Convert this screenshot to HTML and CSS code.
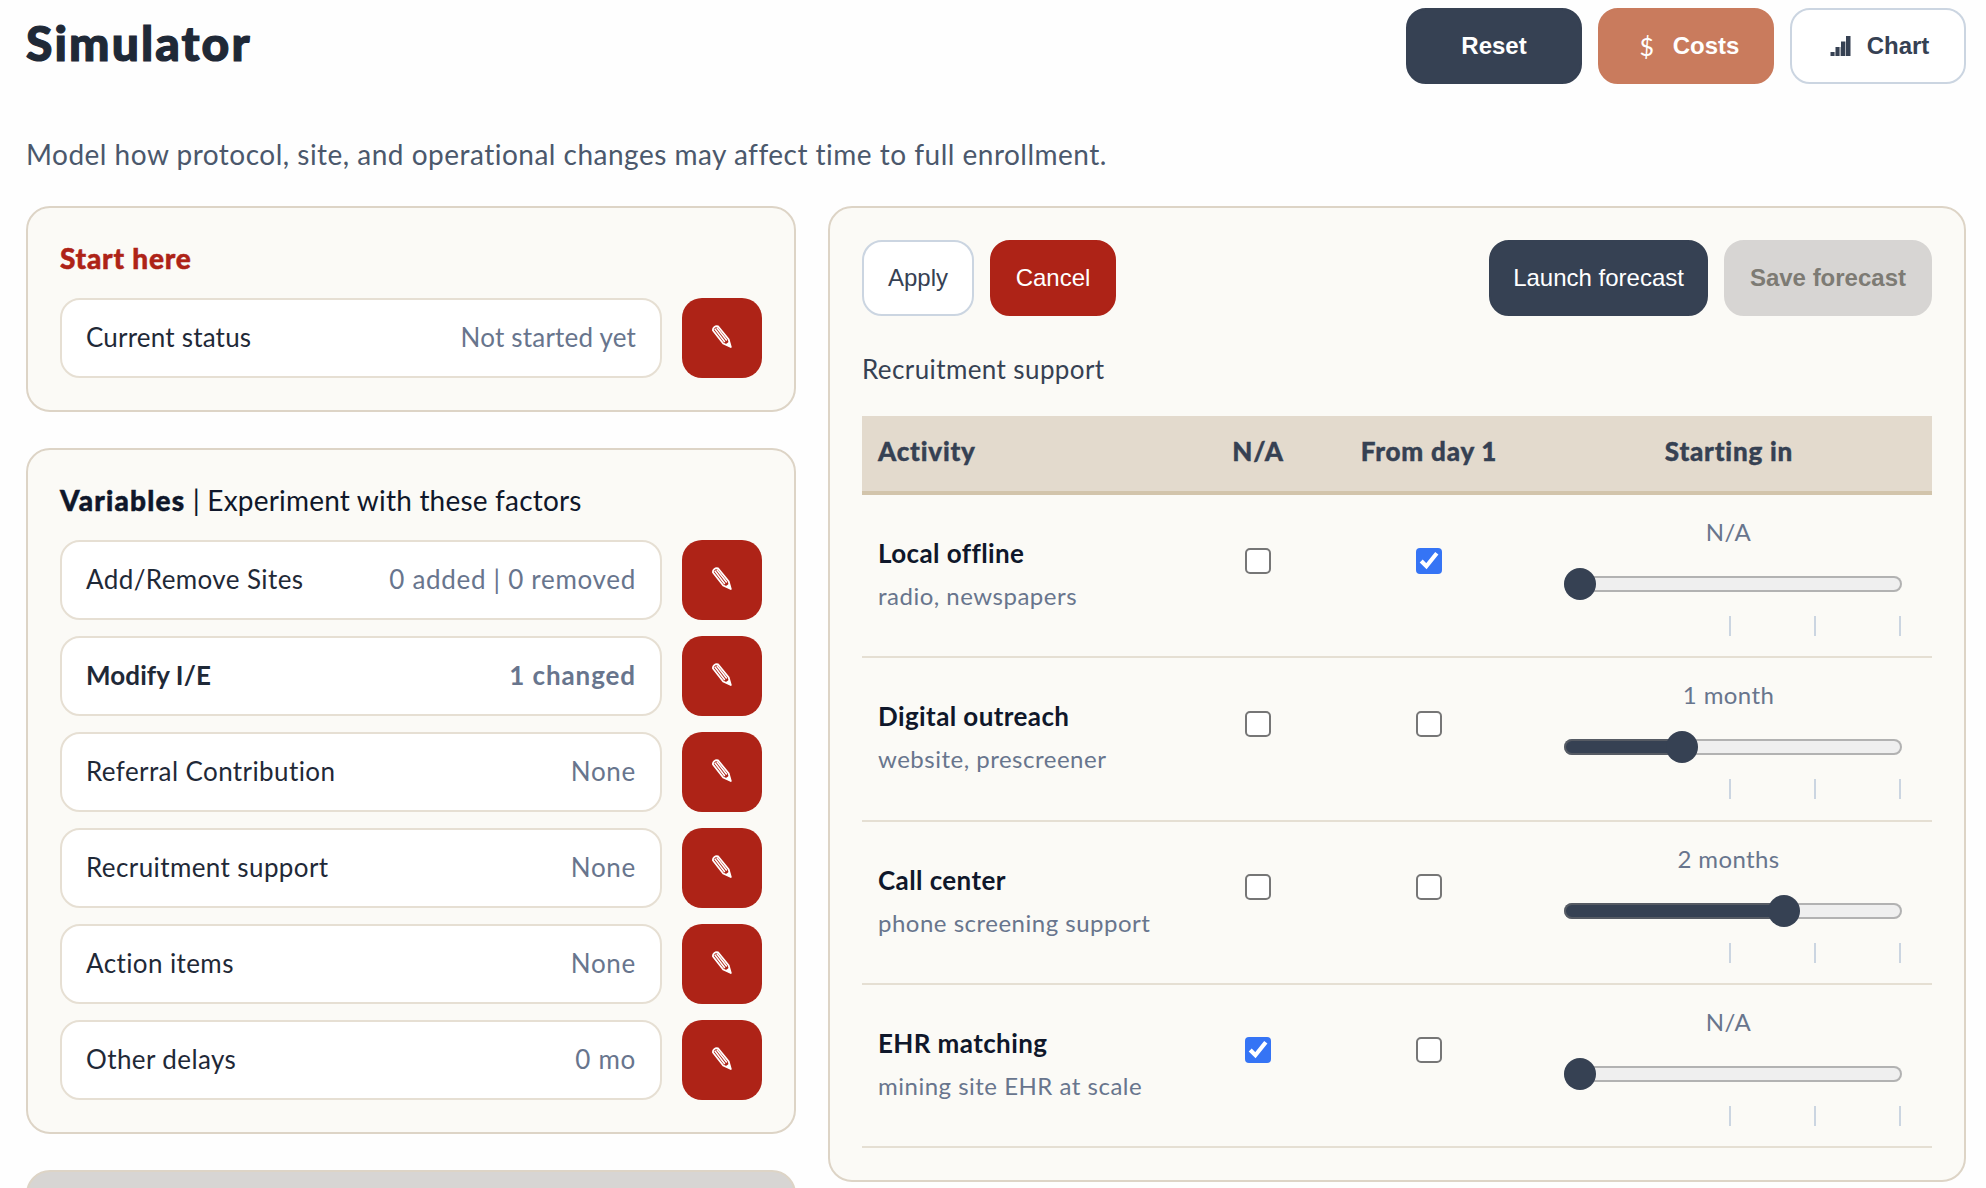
FILE: index.html
```
<!DOCTYPE html>
<html lang="en">
<head>
    <meta charset="UTF-8">
    <meta name="viewport" content="width=device-width, initial-scale=1.0">
    <title>Simulator</title>
    <link rel="stylesheet" href="styles.css">
</head>
<body>
<svg class="sprite" aria-hidden="true">
    <symbol id="pencil" viewBox="0 0 20 23">
        <path fill="none" stroke="currentColor" stroke-width="1.8" stroke-linejoin="round" d="M1 5.5Q.6 3.6 2.3 2.1T6 1.3L16.600 14.2L18.800 22L11.200 18.500Z"/>
        <path fill="none" stroke="currentColor" stroke-width="1.500" d="M2.800 3.800L12.800 17M4.700 2.500L14.800 15.500"/>
        <path fill="currentColor" d="M13.200 19.500L17.400 16.500L19.300 22.600Z"/>
    </symbol>
</svg>
<div class="page">
    <header class="header">
        <h1>Simulator</h1>
        <div class="header-actions">
            <button class="btn btn-wide btn-dark btn-bold">Reset</button>
            <button class="btn btn-wide btn-costs btn-bold"><span class="dollar">$</span>Costs</button>
            <button class="btn btn-wide btn-outline btn-bold">
                <svg class="chart-icon" viewBox="0 0 24 20" fill="currentColor"><path d="M3.500 16h4v4h-4zM8.500 11h4v9h-4zM14 5.500h4V20h-4zM19 0h4.500v20H19z"/><path opacity=".4" d="M7.500 16h1v4h-1zM12.500 11H14v9h-1.500zM18 5.500h1V20h-1z"/></svg>Chart
            </button>
        </div>
    </header>
    <p class="intro">Model how protocol, site, and operational changes may affect time to full enrollment.</p>

    <main class="columns">
        <div class="left">
            <section class="panel">
                <h2 class="start">Start here</h2>
                <div class="rows">
                    <div class="row">
                        <div class="field field-status"><span>Current status</span><span class="value">Not started yet</span></div>
                        <button class="edit"><svg><use href="#pencil"/></svg></button>
                    </div>
                </div>
            </section>
            <section class="panel">
                <h2><b>Variables</b> | Experiment with these factors</h2>
                <div class="rows">
                    <div class="row">
                        <div class="field"><span>Add/Remove Sites</span><span class="value">0 added | 0 removed</span></div>
                        <button class="edit"><svg><use href="#pencil"/></svg></button>
                    </div>
                    <div class="row">
                        <div class="field changed"><span>Modify I/E</span><span class="value">1 changed</span></div>
                        <button class="edit"><svg><use href="#pencil"/></svg></button>
                    </div>
                    <div class="row">
                        <div class="field"><span>Referral Contribution</span><span class="value">None</span></div>
                        <button class="edit"><svg><use href="#pencil"/></svg></button>
                    </div>
                    <div class="row">
                        <div class="field"><span>Recruitment support</span><span class="value">None</span></div>
                        <button class="edit"><svg><use href="#pencil"/></svg></button>
                    </div>
                    <div class="row">
                        <div class="field"><span>Action items</span><span class="value">None</span></div>
                        <button class="edit"><svg><use href="#pencil"/></svg></button>
                    </div>
                    <div class="row">
                        <div class="field"><span>Other delays</span><span class="value">0 mo</span></div>
                        <button class="edit"><svg><use href="#pencil"/></svg></button>
                    </div>
                </div>
            </section>
            <section class="panel panel-disabled"></section>
        </div>

        <section class="panel">
            <div class="toolbar">
                <button class="btn btn-outline">Apply</button>
                <button class="btn btn-red">Cancel</button>
                <button class="btn btn-dark btn-launch">Launch forecast</button>
                <button class="btn btn-bold btn-disabled">Save forecast</button>
            </div>
            <p class="table-title">Recruitment support</p>
            <div class="grid grid-head">
                <span class="activity">Activity</span><span>N/A</span><span>From day 1</span><span>Starting in</span>
            </div>
            <div class="grid">
                <div class="activity"><strong>Local offline</strong><small>radio, newspapers</small></div>
                <input type="checkbox">
                <input type="checkbox" checked>
                <div class="starting">
                    <span>N/A</span>
                    <input type="range" min="0" max="3" value="0" style="--fill: 0%">
                    <div class="ticks"><i></i><i></i><i></i></div>
                </div>
            </div>
            <div class="grid">
                <div class="activity"><strong>Digital outreach</strong><small>website, prescreener</small></div>
                <input type="checkbox">
                <input type="checkbox">
                <div class="starting">
                    <span>1 month</span>
                    <input type="range" min="0" max="3" value="1" style="--fill: 33.3%">
                    <div class="ticks"><i></i><i></i><i></i></div>
                </div>
            </div>
            <div class="grid">
                <div class="activity"><strong>Call center</strong><small>phone screening support</small></div>
                <input type="checkbox">
                <input type="checkbox">
                <div class="starting">
                    <span>2 months</span>
                    <input type="range" min="0" max="3" value="2" style="--fill: 66.6%">
                    <div class="ticks"><i></i><i></i><i></i></div>
                </div>
            </div>
            <div class="grid">
                <div class="activity"><strong>EHR matching</strong><small>mining site EHR at scale</small></div>
                <input type="checkbox" checked>
                <input type="checkbox">
                <div class="starting">
                    <span>N/A</span>
                    <input type="range" min="0" max="3" value="0" style="--fill: 0%">
                    <div class="ticks"><i></i><i></i><i></i></div>
                </div>
            </div>
        </section>
    </main>
</div>
</body>
</html>
```
FILE: styles.css
```
* {
    box-sizing: border-box;
}
body {
    margin: 0;
    background: #fefefe;
    color: #0f172a;
    font-family: "Avenir Next", Lato, sans-serif;
    font-size: 26px;
    letter-spacing: 0.4px;
}
h1, h2, p {
    margin: 0;
}
.sprite {
    display: none;
}
.page {
    height: 1188px;
    overflow: hidden;
    padding: 8px 20px 0 26px;
}
.header {
    display: flex;
    justify-content: space-between;
    height: 76px;
}
h1 {
    font-size: 48px;
    font-weight: 900;
    line-height: 70px;
    letter-spacing: 2.1px;
    color: #1f2937;
    -webkit-text-stroke: 1.2px #1f2937;
}
.header-actions {
    display: flex;
    gap: 16px;
}
.btn {
    display: flex;
    align-items: center;
    justify-content: center;
    height: 76px;
    padding: 0 24px;
    border: 2px solid transparent;
    border-radius: 20px;
    font-family: Helvetica, "Liberation Sans", Arial, sans-serif;
    font-size: 24px;
    line-height: 28px;
    letter-spacing: 0;
    white-space: nowrap;
}
.btn-wide {
    width: 176px;
    gap: 16px;
}
.btn-bold {
    font-weight: bold;
}
.btn-dark {
    background: #364153;
    border-color: #364153;
    color: #fff;
}
.btn-costs {
    background: #c97b5d;
    border-color: #c97b5d;
    color: #fff;
}
.btn-outline {
    background: #fff;
    border-color: #cbd5e1;
    color: #364153;
}
.btn-red {
    width: 126px;
    background: #ae2317;
    border-color: #ae2317;
    color: #fff;
}
.btn-disabled {
    background: #d7d5d3;
    border-color: #d7d5d3;
    color: #7d7b74;
}
.dollar {
    width: 24px;
    padding-left: 4px;
    font-family: "Avenir Next", Lato, sans-serif;
    font-size: 25px;
    font-weight: 400;
    text-align: center;
}
.chart-icon {
    width: 24px;
    height: 20px;
}
.intro {
    height: 122px;
    padding-top: 52px;
    font-size: 28px;
    line-height: 36px;
    letter-spacing: 0.49px;
    color: #4b586c;
}
.columns {
    display: grid;
    grid-template-columns: 770px 1138px;
    gap: 32px;
    align-items: start;
}
.left {
    display: grid;
    gap: 36px;
}
.panel {
    padding: 32px;
    border: 2px solid #ddd4c6;
    border-radius: 24px;
    background: #fbfaf6;
}
.panel-disabled {
    height: 100px;
    background: #d7d5d3;
}
h2 {
    height: 58px;
    font-size: 28px;
    font-weight: 400;
    line-height: 36px;
    letter-spacing: 0.2px;
}
h2 b {
    font-weight: 900;
    letter-spacing: 1.2px;
    -webkit-text-stroke: 0.5px #0f172a;
}
.start {
    font-weight: 900;
    letter-spacing: 0.8px;
    color: #ae2317;
    -webkit-text-stroke: 0.5px #ae2317;
}
.rows {
    display: grid;
    gap: 16px;
}
.row {
    display: flex;
    gap: 20px;
}
.field {
    display: flex;
    flex: 1;
    justify-content: space-between;
    align-items: center;
    height: 80px;
    padding: 0 24px 2px;
    border: 2px solid #e6dfd3;
    border-radius: 20px;
    background: #fff;
    color: #1f2937;
}
.field.changed {
    font-weight: 700;
    letter-spacing: 0.1px;
}
.value {
    letter-spacing: 0.7px;
    color: #68758d;
}
.changed .value {
    letter-spacing: 0.9px;
}
.field-status,
.field-status .value {
    letter-spacing: 0.2px;
}
.edit {
    display: flex;
    align-items: center;
    justify-content: center;
    width: 80px;
    height: 80px;
    padding: 0 1px 3px 0;
    border: none;
    border-radius: 20px;
    background: #ae2317;
    color: #fff;
}
.edit svg {
    width: 20px;
    height: 23px;
}
.toolbar {
    display: flex;
    gap: 16px;
}
.btn-launch {
    margin-left: auto;
    padding: 0 22px;
}
.table-title {
    height: 100px;
    padding-top: 35px;
    line-height: 36px;
    color: #364153;
}
.grid {
    display: grid;
    grid-template-columns: 322px 148px 194px 406px;
    justify-items: center;
    align-items: start;
    height: 163.3px;
    border-bottom: 2px solid #e5dfd3;
}
.grid .activity {
    justify-self: start;
    padding-left: 16px;
}
.grid-head {
    height: 79px;
    padding-top: 17px;
    border-bottom: 4px solid #d2c4ab;
    background: #e3dacd;
    color: #364153;
    font-weight: 900;
    line-height: 36px;
    letter-spacing: 0.8px;
    -webkit-text-stroke: 0.4px #364153;
}
.activity strong {
    display: block;
    padding-top: 40px;
    font-weight: 700;
    line-height: 36px;
}
.activity small {
    display: block;
    padding-top: 8px;
    font-size: 24px;
    line-height: 34px;
    letter-spacing: 0.5px;
    color: #68758d;
}
input[type="checkbox"] {
    width: 13px;
    height: 13px;
    margin: 26.25px 0 0;
    zoom: 2;
    accent-color: #3574f5;
}
.starting {
    display: flex;
    flex-direction: column;
    align-items: center;
    width: 338px;
    margin-left: 8px;
    padding-top: 20px;
    font-size: 24px;
    line-height: 34px;
    color: #68758d;
}
.starting span {
    margin-right: 9px;
}
input[type="range"] {
    appearance: none;
    width: 338px;
    height: 32px;
    margin: 19px 0 16px;
    background: none;
}
input[type="range"]::-webkit-slider-runnable-track {
    height: 16px;
    border-radius: 8px;
    background: linear-gradient(to right, #364153 var(--fill), #efefef var(--fill));
    box-shadow: inset 0 0 0 2px rgba(118, 118, 118, 0.5);
}
input[type="range"]::-webkit-slider-thumb {
    appearance: none;
    width: 32px;
    height: 32px;
    margin-top: -8px;
    border-radius: 50%;
    background: #364153;
}
.ticks {
    display: flex;
    justify-content: space-between;
    align-self: flex-end;
    width: 172px;
    margin-right: 1px;
}
.ticks i {
    width: 2px;
    height: 20px;
    background: #cbd5e1;
}
```
